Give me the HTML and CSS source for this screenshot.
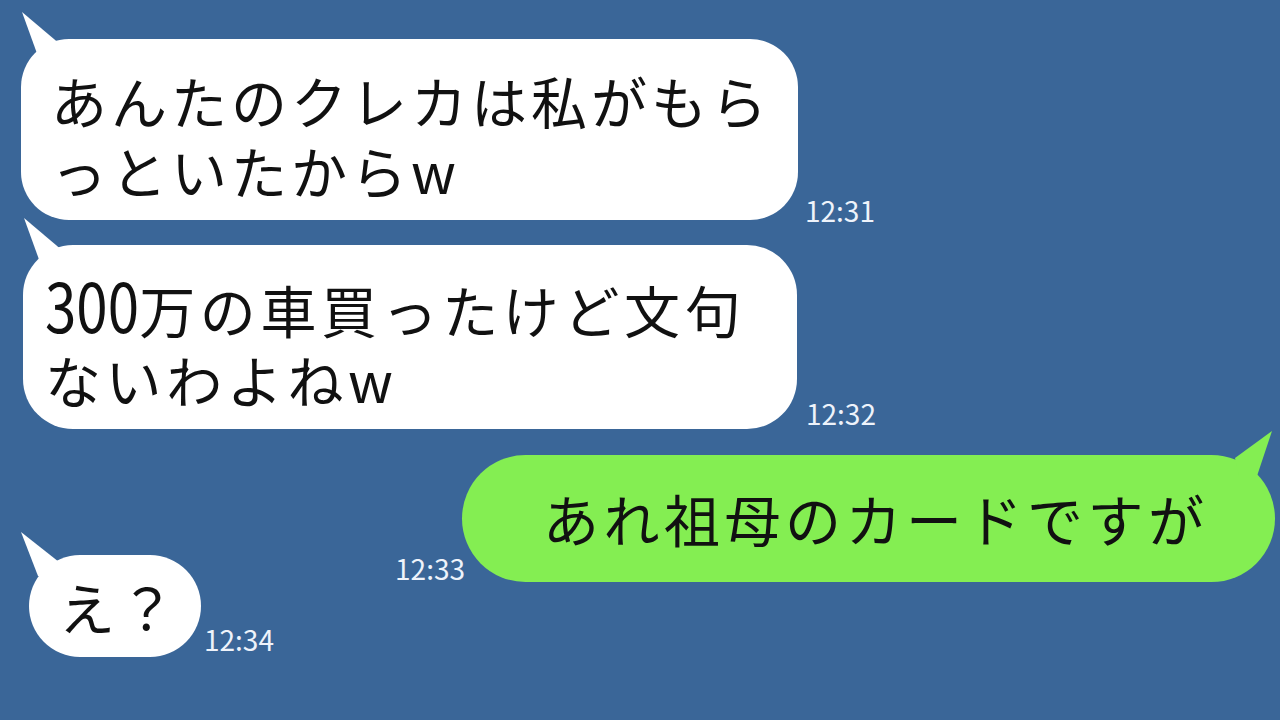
FILE: index.html
```html
<!DOCTYPE html>
<html lang="ja">
<head>
<meta charset="utf-8">
<title>chat</title>
<link rel="stylesheet" href="styles.css">
</head>
<body>
<div class="chat">
  <div class="row row1">
    <div class="bubble white b1">あんたのクレカは私がもら<br>っといたからw</div>
    <span class="time t1">12:31</span>
  </div>
  <div class="row row2">
    <div class="bubble white b2"><span class="num">300</span>万の車買ったけど文句<br>ないわよねw</div>
    <span class="time t2">12:32</span>
  </div>
  <div class="row row3">
    <span class="time t3">12:33</span>
    <div class="bubble green b3">あれ祖母のカードですが</div>
  </div>
  <div class="row row4">
    <div class="bubble white b4">え？</div>
    <span class="time t4">12:34</span>
  </div>
</div>
</body>
</html>
```
FILE: styles.css
```css
html, body {
  margin: 0;
  padding: 0;
}
body {
  width: 1280px;
  height: 720px;
  overflow: hidden;
  background: #3a6698;
  font-family: "Noto Sans CJK JP", "Noto Sans", sans-serif;
}
.chat {
  display: flex;
  flex-direction: column;
  padding-top: 39px;
}
.row {
  display: flex;
  align-items: flex-end;
}
.bubble {
  position: relative;
  box-sizing: border-box;
  color: #111;
  font-size: 56px;
  line-height: 70px;
  letter-spacing: 4px;
  white-space: nowrap;
}
.num {
  display: inline-block;
  font-size: 68px;
  line-height: 70px;
  letter-spacing: 0;
  transform: scaleX(0.83);
  transform-origin: left center;
  margin-right: -19px;
}
.white { background: #fff; }
.green { background: #84ee52; }
.white::before {
  content: "";
  position: absolute;
  left: 0;
  top: -28px;
  width: 42px;
  height: 50px;
  background: #fff;
  clip-path: polygon(1px 1px, 40px 34px, 36px 48px, 18px 48px);
}
.row1 { margin-left: 21px; }
.b1 {
  width: 777px;
  height: 181px;
  border-radius: 48px;
  padding: 26px 0 0 30px;
}
.row2 { margin-left: 23px; margin-top: 25px; }
.b2 {
  width: 774px;
  height: 184px;
  border-radius: 50px;
  padding: 24px 0 0 22px;
  letter-spacing: 4.6px;
}
.row3 {
  justify-content: flex-end;
  padding-right: 5px;
  margin-top: 26px;
}
.b3 {
  width: 813px;
  height: 127px;
  border-radius: 64px;
  padding: 28px 0 0 81px;
  letter-spacing: 4.5px;
}
.b3::before {
  content: "";
  position: absolute;
  right: 0;
  top: -25px;
  width: 44px;
  height: 48px;
  background: #84ee52;
  clip-path: polygon(41px 1px, 26px 46px, 8px 46px, 4px 28px);
}
.row4 { margin-left: 29px; margin-top: -27px; }
.b4 {
  width: 172px;
  height: 102px;
  border-radius: 51px;
  padding: 16px 0 0 30px;
}
.b4::before {
  left: -8px;
  top: -23px;
  width: 44px;
  height: 46px;
  clip-path: polygon(0 0, 38px 30px, 34px 44px, 17px 44px);
}
.time {
  color: #eef3fb;
  font-size: 28px;
  line-height: 28px;
  white-space: nowrap;
}
.t1 { margin-left: 7px; margin-bottom: -4px; }
.t2 { margin-left: 9px; margin-bottom: 2px; }
.t3 { margin-right: -3px; margin-bottom: 0; }
.t4 { margin-left: 3px; margin-bottom: 4px; }
```
